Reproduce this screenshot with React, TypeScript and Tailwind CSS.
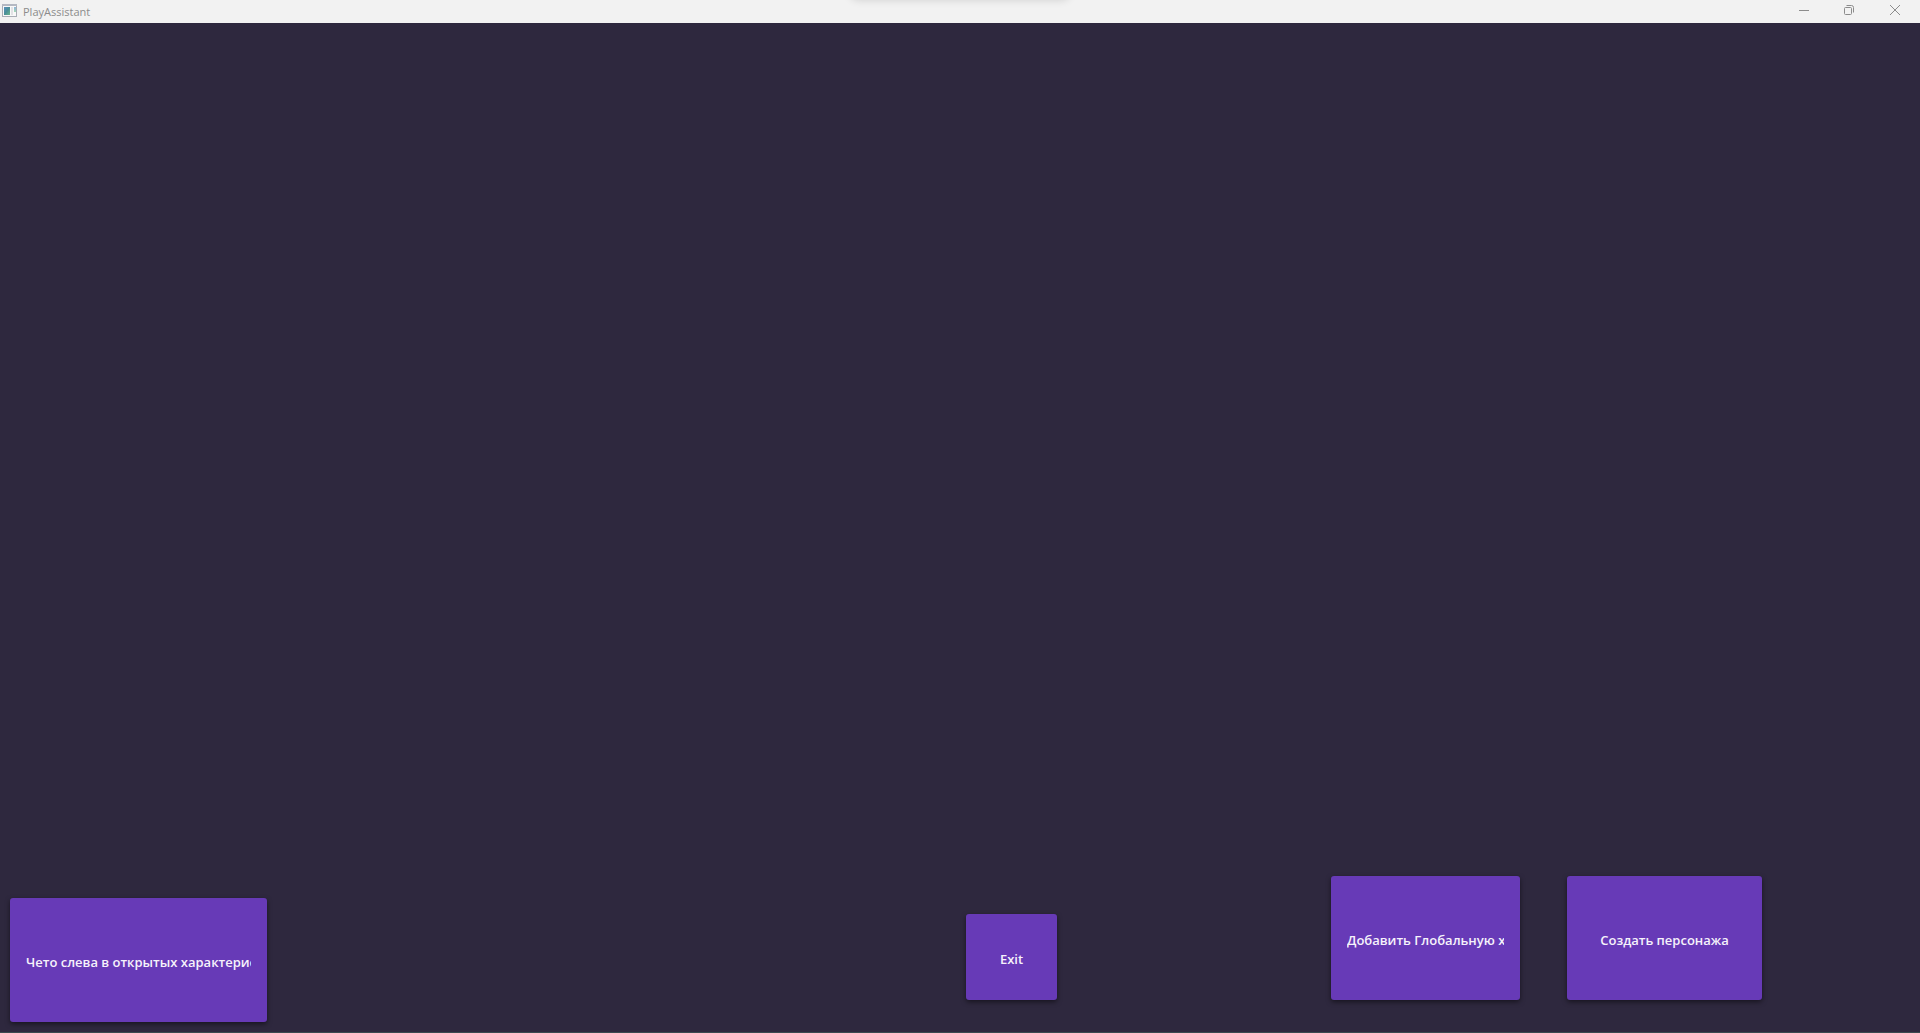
import type { ReactNode } from "react";

function ActionButton({ children, className }: { children: ReactNode; className: string }) {
  return (
    <button
      type="button"
      className={`flex items-center rounded-[3px] bg-[#673ab7] px-4 pt-1 text-[13px] leading-5 font-semibold text-[#f6f2fb] shadow-[0_2px_5px_rgba(0,0,0,0.5)] ${className}`}
    >
      <span className="min-w-0 flex-1 overflow-hidden whitespace-nowrap">{children}</span>
    </button>
  );
}

function AppIcon() {
  return (
    <svg width="15" height="13" viewBox="0 0 15 13" aria-hidden="true">
      <defs>
        <linearGradient id="pane" x1="0" y1="0" x2="1" y2="1">
          <stop offset="0" stopColor="#5b8fc0" />
          <stop offset="0.5" stopColor="#4a8f98" />
          <stop offset="1" stopColor="#6cb88c" />
        </linearGradient>
        <linearGradient id="strip" x1="0" y1="0" x2="0" y2="1">
          <stop offset="0" stopColor="#8fb3dc" />
          <stop offset="1" stopColor="#a5d9b4" />
        </linearGradient>
      </defs>
      <rect x="0.5" y="0.5" width="14" height="12" fill="#f8f8f8" stroke="#a9adb5" />
      <path d="M0 1h15" stroke="#b4b8c2" strokeWidth="2" />
      <rect x="2" y="3" width="6" height="8" fill="url(#pane)" />
      <rect x="9" y="3" width="2" height="8" fill="#e2e2e5" />
      <rect x="12" y="3" width="2" height="5" fill="url(#strip)" />
    </svg>
  );
}

function TitleBar() {
  return (
    <header className="relative flex h-[23px] shrink-0 items-stretch justify-between overflow-hidden bg-[#f2f2f2] text-[#8c8c8c]">
      <div className="absolute -top-4 left-1/2 h-4 w-[220px] -translate-x-1/2 rounded-lg shadow-[0_0_8px_rgba(0,0,0,0.14)]" />
      <div className="flex items-start gap-1.5 pt-1 pl-0.5">
        <AppIcon />
        <h1 className="text-[11px] leading-4">PlayAssistant</h1>
      </div>
      <div className="flex pr-px">
        <button type="button" aria-label="Minimize" className="flex w-[46px] justify-center pt-[5px]">
          <svg width="10" height="10" viewBox="0 0 10 10" fill="none" stroke="currentColor">
            <path d="M0 5.5h10" />
          </svg>
        </button>
        <button type="button" aria-label="Restore" className="flex w-[44px] justify-center pt-[5px]">
          <svg width="10" height="10" viewBox="0 0 10 10" fill="none" stroke="currentColor">
            <rect x="0.5" y="2.5" width="7" height="7" rx="1" />
            <path d="M2.5 0.5H7.5A2 2 0 0 1 9.5 2.5V7.5" />
          </svg>
        </button>
        <button type="button" aria-label="Close" className="flex w-[48px] justify-center pt-[5px]">
          <svg width="10" height="10" viewBox="0 0 10 10" fill="none" stroke="currentColor">
            <path d="M0 0l10 10M10 0L0 10" />
          </svg>
        </button>
      </div>
    </header>
  );
}

export default function App() {
  return (
    <div className="flex min-h-screen flex-col border-b border-[#3a4a50] bg-[#2e283e] font-['Open_Sans','Noto_Sans',sans-serif]">
      <TitleBar />
      <main className="flex flex-1 items-end pr-[158px] pb-[10px] pl-[10px]">
        <ActionButton className="h-[124px] w-[257px] text-left">Чето слева в открытых характерис</ActionButton>
        <div className="mb-[22px] ml-auto flex items-end">
          <ActionButton className="mr-[274px] h-[86px] w-[91px] text-center">Exit</ActionButton>
          <ActionButton className="mr-[47px] h-[124px] w-[189px] text-left">Добавить Глобальную х</ActionButton>
          <ActionButton className="h-[124px] w-[195px] text-center">Создать персонажа</ActionButton>
        </div>
      </main>
    </div>
  );
}
